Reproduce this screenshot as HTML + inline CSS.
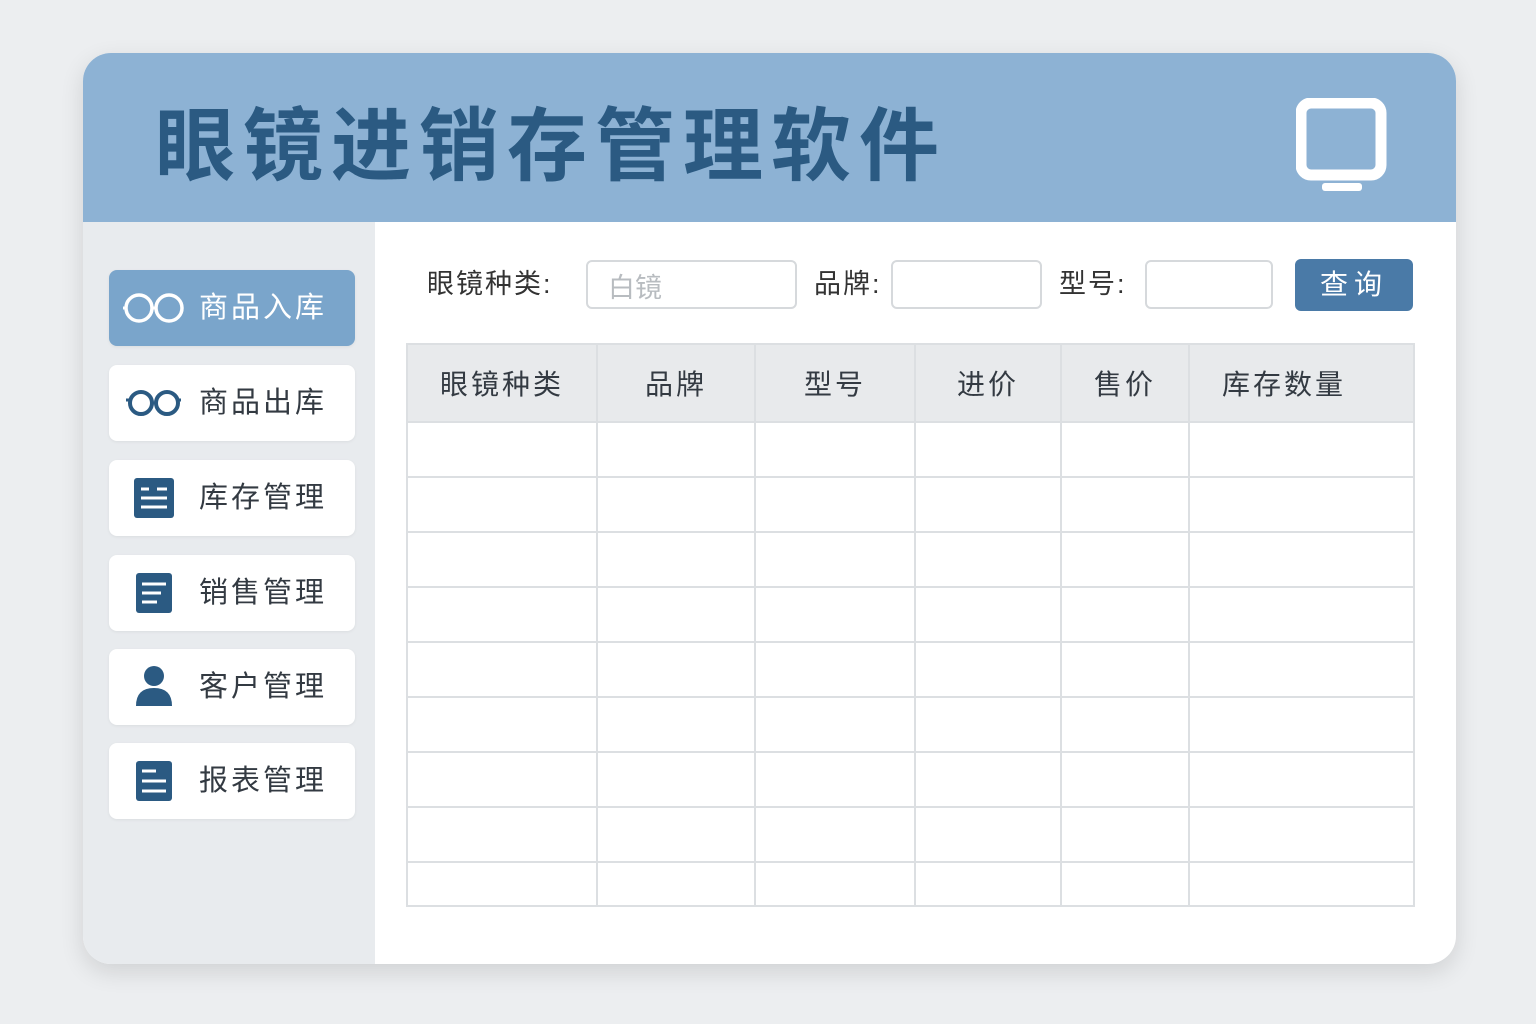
<!DOCTYPE html>
<html><head><meta charset="utf-8"><style>
*{margin:0;padding:0;box-sizing:border-box}
body{width:1536px;height:1024px;background:#eceef0;font-family:"Liberation Sans","Noto Sans CJK SC",sans-serif;position:relative;overflow:hidden}
.card{position:absolute;left:83px;top:53px;width:1373px;height:911px;border-radius:28px;background:#fff;overflow:hidden;box-shadow:0 8px 24px rgba(0,0,0,.12)}
.hdr{position:absolute;left:0;top:0;width:100%;height:169px;background:#8db2d4}
.title{position:absolute;left:72px;top:46px;font-size:80px;font-weight:bold;color:#2b5a82;letter-spacing:8px;line-height:96px}
.side{position:absolute;left:0;top:169px;width:292px;height:742px;background:#e8ebee}
.btn{position:absolute;left:26px;width:246px;height:76px;background:#fff;border-radius:8px;box-shadow:0 1px 3px rgba(0,0,0,.06)}
.btn span{position:absolute;left:90px;top:18px;font-size:29px;color:#333a42;letter-spacing:3px;line-height:40px}
.btn.act{background:#7aa5cb}.btn.act span{color:#fff}
.btn svg{position:absolute;left:14px;top:18px}
.lbl{position:absolute;top:264px;font-size:27px;color:#333;line-height:40px;letter-spacing:2px}
.inp{position:absolute;top:260px;height:49px;border:2px solid #d6d9dc;border-radius:6px;background:#fff}
table{position:absolute;left:406px;top:343px;width:1009px;height:564px;border-collapse:collapse;border:2px solid #d6d9dc}
td,th{border:2px solid #dcdfe2}
th{background:#e8eaec;height:78px;font-size:28px;font-weight:normal;color:#333a42;letter-spacing:3px}
</style></head><body>
<div class="card">
<div class="hdr"><div class="title">眼镜进销存管理软件</div>
<svg style="position:absolute;left:1213px;top:45px" width="92" height="96"><rect x="5" y="5" width="80" height="72" rx="10" fill="none" stroke="#fff" stroke-width="11"/><rect x="26" y="85" width="40" height="8" rx="3" fill="#fff"/></svg>
</div>
<div class="side">
<div class="btn act" style="top:48px"><svg width="64" height="40"><circle cx="16" cy="20" r="13" fill="none" stroke="#fff" stroke-width="3.5"/><circle cx="46" cy="20" r="13" fill="none" stroke="#fff" stroke-width="3.5"/><path d="M0 20H3M29 20H33" stroke="#fff" stroke-width="3"/></svg><span>商品入库</span></div>
<div class="btn" style="top:143px"><svg width="64" height="40"><circle cx="18" cy="20" r="11" fill="none" stroke="#2b5a82" stroke-width="4"/><circle cx="44" cy="20" r="11" fill="none" stroke="#2b5a82" stroke-width="4"/><path d="M3 17H7M29 20H33M55 17H58" stroke="#2b5a82" stroke-width="3"/></svg><span>商品出库</span></div>
<div class="btn" style="top:238px"><svg width="64" height="44" style="top:16px"><rect x="11" y="2" width="40" height="40" rx="3" fill="#2b5a82"/><path d="M18 13H26M34 13H44M18 22H44M18 31H44" stroke="#fff" stroke-width="3"/></svg><span>库存管理</span></div>
<div class="btn" style="top:333px"><svg width="64" height="44" style="top:16px"><rect x="13" y="2" width="36" height="40" rx="3" fill="#2b5a82"/><path d="M19 13H43M19 22H38M19 31H34" stroke="#fff" stroke-width="3"/></svg><span>销售管理</span></div>
<div class="btn" style="top:427px"><svg width="64" height="44" style="top:16px"><circle cx="31" cy="11" r="10" fill="#2b5a82"/><path d="M13 41Q13 23 31 23Q49 23 49 41Z" fill="#2b5a82"/></svg><span>客户管理</span></div>
<div class="btn" style="top:521px"><svg width="64" height="44" style="top:16px"><rect x="13" y="2" width="36" height="40" rx="3" fill="#2b5a82"/><path d="M19 12H33M19 22H43M19 32H43" stroke="#fff" stroke-width="3"/></svg><span>报表管理</span></div>
</div>
</div>
<div class="lbl" style="left:427px">眼镜种类:</div>
<div class="inp" style="left:586px;width:211px"><span style="position:absolute;left:20px;top:4px;font-size:27px;color:#b8bcc0">白镜</span></div>
<div class="lbl" style="left:814px">品牌:</div>
<div class="inp" style="left:891px;width:151px"></div>
<div class="lbl" style="left:1059px">型号:</div>
<div class="inp" style="left:1145px;width:128px"></div>
<div style="position:absolute;left:1295px;top:259px;width:118px;height:52px;background:#4a7aa7;border-radius:6px;color:#fff;font-size:28px;text-align:center;line-height:52px;letter-spacing:6px">查询</div>
<table>
<tr><th style="width:190px">眼镜种类</th><th style="width:158px">品牌</th><th style="width:160px">型号</th><th style="width:146px">进价</th><th style="width:128px">售价</th><th style="text-align:left;padding-left:32px">库存数量</th></tr>
<tr style="height:55px"><td></td><td></td><td></td><td></td><td></td><td></td></tr>
<tr style="height:55px"><td></td><td></td><td></td><td></td><td></td><td></td></tr>
<tr style="height:55px"><td></td><td></td><td></td><td></td><td></td><td></td></tr>
<tr style="height:55px"><td></td><td></td><td></td><td></td><td></td><td></td></tr>
<tr style="height:55px"><td></td><td></td><td></td><td></td><td></td><td></td></tr>
<tr style="height:55px"><td></td><td></td><td></td><td></td><td></td><td></td></tr>
<tr style="height:55px"><td></td><td></td><td></td><td></td><td></td><td></td></tr>
<tr style="height:55px"><td></td><td></td><td></td><td></td><td></td><td></td></tr>
<tr><td></td><td></td><td></td><td></td><td></td><td></td></tr>
</table>
</body></html>
